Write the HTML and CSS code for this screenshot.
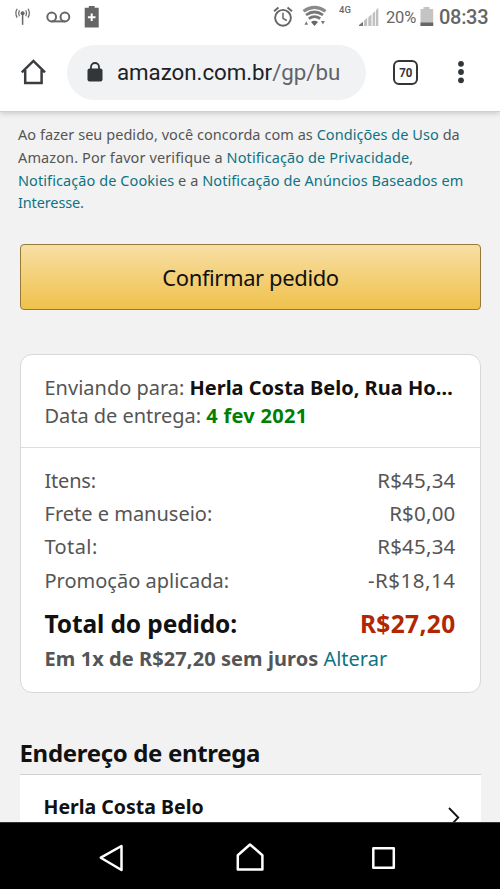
FILE: index.html
```html
<!DOCTYPE html>
<html lang="pt-BR">
<head>
<meta charset="utf-8">
<title>Confirmar pedido</title>
<link rel="stylesheet" href="styles.css">
</head>
<body>
<header class="chrome">
  <div class="status">
    <svg class="status-left" width="110" height="34" viewBox="0 0 110 34" fill="none" stroke="#666">
      <circle cx="22.6" cy="13.2" r="2" fill="#666" stroke="none"/>
      <path d="M22.6 14v10.8" stroke-width="1.5"/>
      <path d="M19.4 10.200q-1.600 3 0 6M25.800 10.200q1.600 3 0 6M17.200 8.800q-2.700 4.400 0 8.800M28 8.800q2.700 4.400 0 8.800" stroke-width="1.200"/>
      <circle cx="51.700" cy="17" r="4.400" stroke-width="2"/>
      <circle cx="64.900" cy="17" r="4.400" stroke-width="2"/>
      <path d="M51.700 21.400h13.200" stroke-width="2"/>
      <path d="M88.800 6h5.800v1.800h4.100v19.800h-14V7.800h4.100z" fill="#666" stroke="none"/>
      <path d="M91.700 13.500v7.600M87.900 17.300h7.600" stroke="#fff" stroke-width="2"/>
    </svg>
    <svg class="status-right" width="113" height="34" viewBox="270 0 113 34" fill="none" stroke="#666">
      <circle cx="283" cy="17.800" r="7.900" stroke-width="1.900"/>
      <path d="M283 12.800v5.500l3.700 2.200" stroke-width="1.500"/>
      <path d="M274 11.300l4.500-3.700M292 11.300l-4.500-3.700" stroke-width="1.900"/>
      <path d="M303.500 11.200q11-7.600 22 0" stroke="#8a8a8a" stroke-width="3"/>
      <path d="M306 15q8.500-6 17 0M308.800 18.600q5.800-4 11.400 0" stroke="#777" stroke-width="2.700"/>
      <path d="M311 22q3.500-2.700 7 0l-3.500 4z" fill="#666" stroke="none"/>
      <path d="M304.500 24.700l1.800-3.500 1.800 3.500zM321 21h3.800l-1.900 3.600z" fill="#777" stroke="none"/>
      <text class="network" x="339" y="13">4G</text>
      <path d="M359 26v-1l4-3.200V26z" fill="#777" stroke="none"/>
      <path d="M364 26v-5.500l3.200-2.700V26zM368.300 26v-8.800l3.200-2.900V26zM372.600 26V13.500l2.600-2.400V26zM376 26V10l2.300-2.200V26z" fill="#c0c0c0" stroke="none"/>
    </svg>
    <span class="percent">20%</span>
    <svg class="battery" width="14" height="22" viewBox="0 0 14 22">
      <path d="M3.500 1h6v2h3.700v17H.5V3h3z" fill="#c4c4c4"/>
      <path d="M.5 16.500h12.700V20H.5z" fill="#666"/>
    </svg>
    <span class="clock">08:33</span>
  </div>
  <div class="toolbar">
    <svg class="home" width="28" height="28" viewBox="0 0 28 28" fill="none" stroke="#3a3d40" stroke-width="2.500">
      <path d="M1.800 14.300L13.400 2.900l11.600 11.400M5.200 12v12.900h16.400V12"/>
    </svg>
    <div class="address">
      <svg class="lock" width="16" height="22" viewBox="0 0 16 22">
        <path d="M4 9V6a4 4 0 0 1 8 0v3" fill="none" stroke="#333639" stroke-width="1.800"/>
        <rect x=".5" y="7.500" width="15" height="13" rx="2" fill="#333639"/>
      </svg>
      <span class="url">amazon.com.br<span class="path">/gp/bu</span></span>
    </div>
    <div class="tabs"><span class="tabs-count">70</span></div>
    <svg class="more" width="8" height="26" viewBox="0 0 8 26" fill="#333639">
      <circle cx="4" cy="4.800" r="2.900"/><circle cx="4" cy="13" r="2.900"/><circle cx="4" cy="21.300" r="2.900"/>
    </svg>
  </div>
</header>
<main class="page">
  <p class="legal">
    <span class="line l1">Ao fazer seu pedido, você concorda com as <a>Condições de Uso</a> da</span>
    <span class="line l2">Amazon. Por favor verifique a <a>Notificação de Privacidade</a>,</span>
    <span class="line l3"><a>Notificação de Cookies</a> e a <a>Notificação de Anúncios Baseados em</a></span>
    <span class="line l4"><a>Interesse.</a></span>
  </p>
  <button class="confirm">Confirmar pedido</button>
  <section class="card">
    <div class="shipping">
      <div class="ship-line"><span>Enviando para:</span> <b class="name">Herla Costa Belo, Rua Ho…</b></div>
      <div class="ship-line"><span class="date">Data de entrega:</span> <b class="when">4 fev 2021</b></div>
    </div>
    <div class="totals">
      <div class="row"><span class="items">Itens:</span><span class="amount">R$45,34</span></div>
      <div class="row"><span>Frete e manuseio:</span><span class="amount">R$0,00</span></div>
      <div class="row"><span class="subtotal">Total:</span><span class="amount">R$45,34</span></div>
      <div class="row"><span>Promoção aplicada:</span><span class="amount discount">-R$18,14</span></div>
      <div class="row grand"><b class="grand-label">Total do pedido:</b><b class="grand-amount">R$27,20</b></div>
      <div class="installments"><b class="inst">Em 1x de R$27,20 sem juros</b> <a>Alterar</a></div>
    </div>
  </section>
  <h2 class="heading">Endereço de entrega</h2>
  <section class="recipient">
    <b>Herla Costa Belo</b>
    <svg class="chevron" width="14" height="22" viewBox="0 0 14 22" fill="none" stroke="#111" stroke-width="1.800"><path d="M2 2l9.300 9.500L2 21"/></svg>
  </section>
</main>
<footer class="nav">
  <svg width="500" height="66" viewBox="0 823 500 66" fill="none" stroke="#fff" stroke-width="2.500" stroke-linejoin="round">
    <path d="M100.800 857.700l20.700-11.700v24z"/>
    <path d="M237.800 869.500v-14.300L250 844.500l12.400 10.700v14.300z"/>
    <rect x="373.300" y="848.300" width="20.500" height="19.500"/>
  </svg>
</footer>
</body>
</html>
```
FILE: styles.css
```css
* { box-sizing: border-box; }
body {
  margin: 0;
  width: 500px;
  height: 889px;
  overflow: hidden;
  display: flex;
  flex-direction: column;
  background: #f2f2f2;
  color: #555;
  font-family: "Noto Sans", "Open Sans", sans-serif;
  white-space: nowrap;
}
a { color: #0f7282; }
.chrome {
  flex: none;
  height: 112px;
  background: #fff;
  border-bottom: 1px solid #cfcfcf;
  box-shadow: 0 1px 6px rgba(0, 0, 0, .2);
  font-family: Roboto, sans-serif;
}
.status { display: flex; align-items: center; height: 34px; color: #666; }
.status-right { margin-left: 160px; }
.network { font-size: 9.500px; font-weight: 500; fill: #666; stroke: none; }
.percent { margin-left: 3px; width: 32px; font-size: 16.500px; letter-spacing: -.2px; }
.battery { margin-left: 2px; }
.clock { margin-left: 5px; font-size: 20px; font-weight: 500; letter-spacing: -.3px; }
.toolbar { display: flex; align-items: center; height: 76px; }
.home { margin-left: 20px; }
.address {
  display: flex;
  align-items: center;
  width: 299px;
  height: 55px;
  margin-left: 19px;
  padding-left: 20px;
  border-radius: 28px;
  background: #f0f2f4;
}
.url { margin-left: 14px; font-size: 22.300px; letter-spacing: -.03px; color: #202124; }
.path { color: #606368; }
.tabs {
  display: flex;
  align-items: center;
  justify-content: center;
  width: 25px;
  height: 25px;
  margin-left: 27px;
  border: 2.500px solid #333639;
  border-radius: 6px;
  font-size: 13.500px;
  font-weight: 700;
  color: #333639;
}
.tabs-count { transform: scaleX(.85); }
.more { margin-left: 39px; }
.page { flex: 1; min-height: 0; overflow: hidden; padding: 11.400px 19px 0 19.500px; }
.legal { margin: 0 0 0 -1.500px; font-size: 14.500px; line-height: 22.600px; }
.line { display: table; }
.l1 { letter-spacing: .05px; }
.l2 { letter-spacing: .11px; }
.l3 { letter-spacing: .08px; }
.l4 { letter-spacing: -.13px; }
.confirm {
  display: block;
  width: 461px;
  height: 66px;
  margin-top: 30px;
  padding: 0 0 0 1px;
  border: 1px solid #96783a;
  border-radius: 4px;
  background: linear-gradient(#f7dfa5, #f0c14b);
  font: 22px "Noto Sans", sans-serif;
  letter-spacing: -.4px;
  color: #111;
}
.card {
  width: 461px;
  height: 339px;
  margin-top: 44px;
  border: 1px solid #d8d8d8;
  border-radius: 12px;
  background: #fff;
  font-size: 20px;
}
.shipping { height: 93px; padding: 19px 24px 0; border-bottom: 1px solid #ddd; }
.ship-line { display: flex; gap: 5px; line-height: 28px; }
.name { color: #111; }
.date { letter-spacing: -.03px; }
.when { color: #007f00; letter-spacing: .3px; }
.totals { padding: 16px 24px 0; }
.row { display: flex; justify-content: space-between; line-height: 33.300px; }
.items { letter-spacing: -.2px; }
.subtotal { letter-spacing: .4px; }
.amount { font-size: 20.500px; letter-spacing: .2px; }
.discount { letter-spacing: .5px; }
.grand { height: 54px; line-height: 54px; font-size: 24.500px; color: #111; }
.grand-label { letter-spacing: -.12px; }
.grand-amount { letter-spacing: .35px; color: #b12704; }
.installments { display: flex; gap: 5px; margin-top: -5px; line-height: 26px; }
.inst { letter-spacing: .08px; }
.heading {
  margin: 41px 0 0;
  height: 40px;
  font-size: 24px;
  line-height: 38px;
  letter-spacing: -.33px;
  color: #111;
}
.recipient {
  display: flex;
  justify-content: space-between;
  width: 461px;
  height: 60px;
  padding: 17px 20px 0 24px;
  border-top: 1px solid #d0d0d0;
  background: #fff;
  font-size: 19.500px;
  line-height: 30px;
  color: #111;
}
.chevron { margin-top: 14px; }
.nav { flex: none; height: 67px; background: #000; border-top: 1px solid #333; }
.nav svg { display: block; }
```
